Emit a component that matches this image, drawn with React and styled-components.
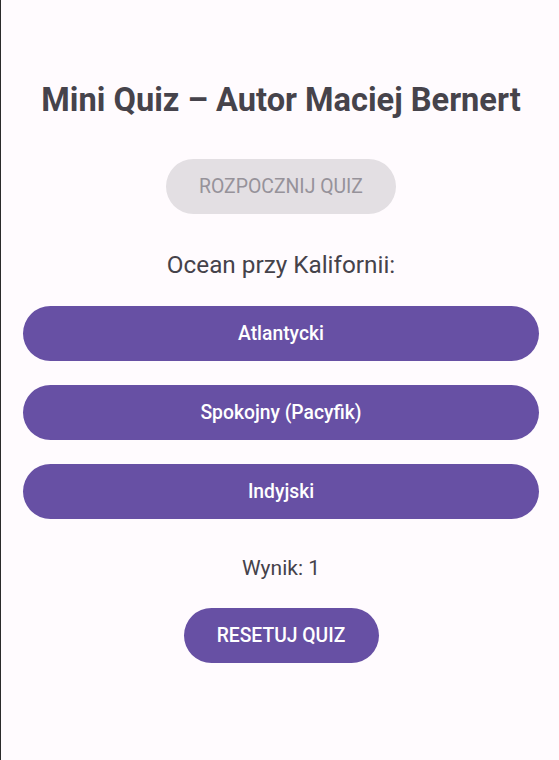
import React from "react";
import styled, { createGlobalStyle } from "styled-components";

const Global = createGlobalStyle`
  html, body { margin: 0; padding: 0; background: #fffbfe; }
  body { font-family: Roboto, "Noto Sans", sans-serif; }
`;

const Screen = styled.div`
  box-sizing: border-box;
  width: 559px;
  height: 760px;
  border-left: 1px solid #2b2b2b;
  background: #fffbfe;
  display: flex;
  flex-direction: column;
  align-items: center;
  padding: 80px 20px 0 22px;
`;

const Title = styled.h1`
  margin: 0;
  font-size: 32.6px;
  font-weight: 700;
  color: #46434b;
  line-height: 40px;
  white-space: nowrap;
`;

const PillButton = styled.button`
  box-sizing: border-box;
  height: 55px;
  border: none;
  border-radius: 28px;
  font-family: Roboto, sans-serif;
  font-weight: ${(p) => (p.$disabled ? 400 : 500)};
  font-size: ${(p) => p.$size || 19.3}px;
  padding: 0;
  background: ${(p) => (p.$disabled ? "#e3dfe3" : "#6750a4")};
  color: ${(p) => (p.$disabled ? "#96929a" : "#ffffff")};
  width: ${(p) => (p.$full ? "100%" : `${p.$w}px`)};
  cursor: pointer;
`;

const Question = styled.p`
  margin: 36px 0 0;
  font-size: 24.3px;
  color: #45424a;
  line-height: 30px;
`;

const Answers = styled.div`
  width: 100%;
  margin-top: 26px;
  display: flex;
  flex-direction: column;
  gap: 24px;
`;

const Score = styled.p`
  margin: 35px 0 0;
  font-size: 21px;
  color: #45424a;
  line-height: 28px;
`;

const Spacer = styled.div`
  height: ${(p) => p.$h}px;
  flex-shrink: 0;
`;

export default function App() {
  return (
    <>
      <Global />
      <Screen>
        <Title>Mini Quiz – Autor Maciej Bernert</Title>
        <Spacer $h={39} />
        <PillButton $disabled $w={230} $size={19.4}>
          ROZPOCZNIJ QUIZ
        </PillButton>
        <Question>Ocean przy Kalifornii:</Question>
        <Answers>
          <PillButton $full>Atlantycki</PillButton>
          <PillButton $full>Spokojny (Pacyfik)</PillButton>
          <PillButton $full>Indyjski</PillButton>
        </Answers>
        <Score>Wynik: 1</Score>
        <Spacer $h={26} />
        <PillButton $w={195}>RESETUJ QUIZ</PillButton>
      </Screen>
    </>
  );
}
